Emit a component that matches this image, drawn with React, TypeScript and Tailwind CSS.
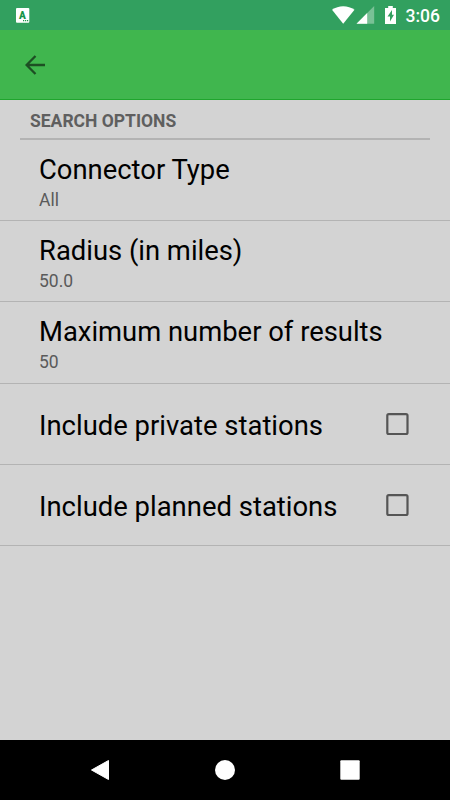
import React from "react"

const options = [
  { title: "Connector Type", value: "All", height: "h-[81px]" },
  { title: "Radius (in miles)", value: "50.0", height: "h-[81px]" },
  { title: "Maximum number of results", value: "50", height: "h-[82px]" },
]

const toggles = ["Include private stations", "Include planned stations"]

const StatusBar = () => (
  <div className="flex h-[30px] items-center justify-between bg-[#32a05f] pl-4 pr-[10px] text-white">
    <svg width="14" height="15" viewBox="0 0 14 15">
      <rect x="0" y="0" width="13.3" height="14.7" rx="1" fill="#fff" />
      <text x="6.5" y="10.5" textAnchor="middle" className="text-[10px] font-black" fill="#169548">A</text>
      <path d="M7 12.7h1.2M9 12.7h1.2M11 12.7h1.2" stroke="#169548" strokeWidth="1.2" />
    </svg>
    <div className="flex items-center">
      <svg width="66" height="20" viewBox="0 0 66 20">
        <path d="M0 4.8 C6.5 0 16 0 22.5 4.8 L11.2 18.8 Z" fill="#fff" />
        <path d="M24.5 18.8 L42.2 1 V18.8 Z" fill="#fff" fillOpacity="0.35" />
        <path d="M24.5 18.8 L35.2 8 V18.8 Z" fill="#fff" />
        <path d="M53 3 h3.2 V1 h4.6 v2 h3.2 V19 H53 Z M60 5 L55.5 11.5 H58 V16.5 L62 9.8 H60 Z" fill="#fff" fillRule="evenodd" />
      </svg>
      <span className="ml-2 pt-px text-[17.5px] font-medium leading-5">3:06</span>
    </div>
  </div>
)

const Checkbox = () => (
  <svg role="checkbox" aria-checked="false" width="23" height="23" viewBox="0 0 23 23">
    <rect x="1.3" y="1.1" width="20.2" height="19.9" rx="1.5" fill="none" stroke="#555" strokeWidth="2.2" />
  </svg>
)

const App = () => {
  return (
    <div className="flex h-[800px] w-[450px] flex-col overflow-hidden bg-[#d3d3d3] font-['Roboto',sans-serif]">
      <StatusBar />

      <header className="flex h-[70px] items-center border-b border-[#1fa52d] bg-[#40b64e] pl-[25px] pt-px">
        <svg width="21" height="20" viewBox="0 0 21 20" fill="none" stroke="#1d4f23" strokeWidth="2.3">
          <path d="M20 10H2M10.5 1L1.6 10L10.5 19" />
        </svg>
      </header>

      <main className="flex-1">
        <h2 className="mx-5 h-10 border-b-2 border-[#b3b3b3] pl-[10px] pt-[11px] text-[17.5px] font-bold leading-5 text-[#5f5f5f]">
          SEARCH OPTIONS
        </h2>

        {options.map((item) => (
          <section key={item.title} className={`${item.height} border-b border-[#b3b3b3] pl-[39px] pt-[14px]`}>
            <h3 className="text-[27.4px] leading-8">{item.title}</h3>
            <p className="mt-1 text-[17.5px] leading-5 text-[#5a5a5a]">{item.value}</p>
          </section>
        ))}

        {toggles.map((label) => (
          <section key={label} className="flex h-[81px] items-center justify-between border-b border-[#b3b3b3] pl-[39px] pr-[41px]">
            <h3 className="pt-[3px] text-[27.45px] leading-8">{label}</h3>
            <Checkbox />
          </section>
        ))}
      </main>

      <nav className="flex h-[60px] items-center bg-black">
        <svg width="450" height="60" viewBox="0 0 450 60" fill="#fff">
          <path d="M91.5 30 L108.5 20.5 V39.5 Z" stroke="#fff" strokeLinejoin="round" />
          <circle cx="225" cy="30" r="10" />
          <rect x="340.3" y="20.3" width="19.4" height="19.4" rx="1" />
        </svg>
      </nav>
    </div>
  )
}

export default App
